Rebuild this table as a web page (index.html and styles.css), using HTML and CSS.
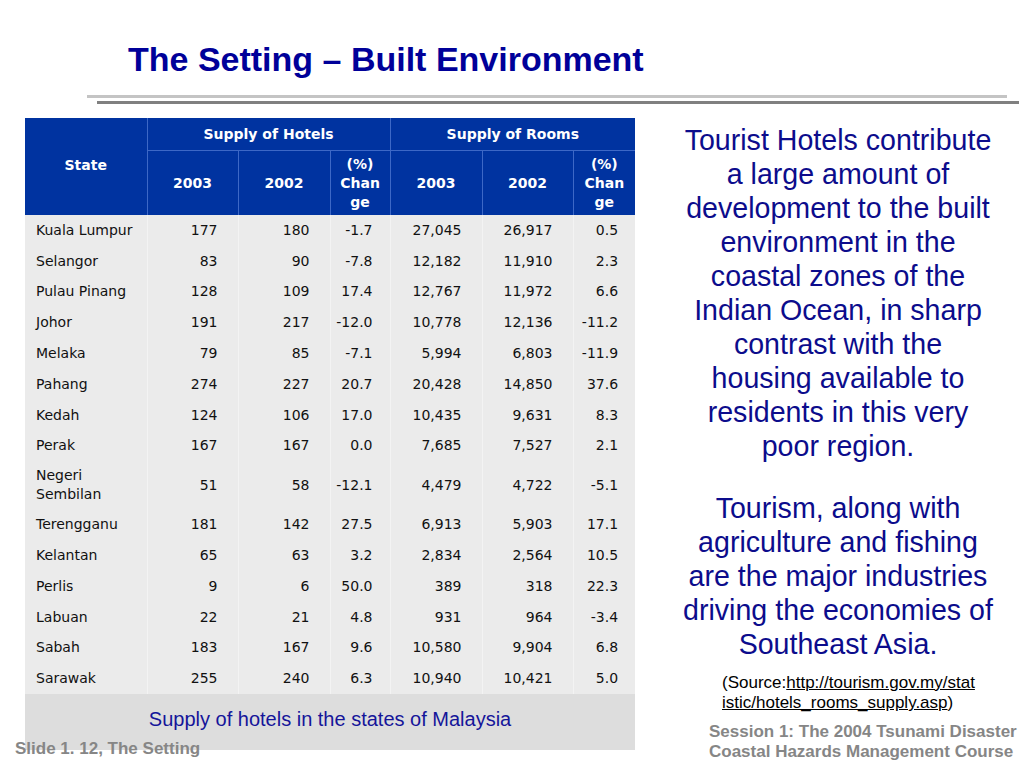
FILE: index.html
```html
<!DOCTYPE html>
<html>
<head>
<meta charset="utf-8">
<title>The Setting – Built Environment</title>
<link rel="stylesheet" href="styles.css">
</head>
<body>
<div class="slide">
  <h1 class="title">The Setting – Built Environment</h1>
  <div class="rule rule-light"></div>
  <div class="rule rule-dark"></div>

  <div class="main">
    <div class="table-wrap">
      <table class="data">
        <colgroup>
          <col class="c-state"><col class="c-num"><col class="c-num2"><col class="c-pct">
          <col class="c-num2"><col class="c-num"><col class="c-pct2">
        </colgroup>
        <thead>
          <tr class="h1">
            <th rowspan="2" class="state-h">State</th>
            <th colspan="3">Supply of Hotels</th>
            <th colspan="3">Supply of Rooms</th>
          </tr>
          <tr class="h2">
            <th>2003</th><th>2002</th><th class="pct-h">(%)<br>Change</th>
            <th>2003</th><th>2002</th><th class="pct-h">(%)<br>Change</th>
          </tr>
        </thead>
        <tbody>
          <tr><td>Kuala Lumpur</td><td>177</td><td>180</td><td>-1.7</td><td>27,045</td><td>26,917</td><td>0.5</td></tr>
          <tr><td>Selangor</td><td>83</td><td>90</td><td>-7.8</td><td>12,182</td><td>11,910</td><td>2.3</td></tr>
          <tr><td>Pulau Pinang</td><td>128</td><td>109</td><td>17.4</td><td>12,767</td><td>11,972</td><td>6.6</td></tr>
          <tr><td>Johor</td><td>191</td><td>217</td><td>-12.0</td><td>10,778</td><td>12,136</td><td>-11.2</td></tr>
          <tr><td>Melaka</td><td>79</td><td>85</td><td>-7.1</td><td>5,994</td><td>6,803</td><td>-11.9</td></tr>
          <tr><td>Pahang</td><td>274</td><td>227</td><td>20.7</td><td>20,428</td><td>14,850</td><td>37.6</td></tr>
          <tr><td>Kedah</td><td>124</td><td>106</td><td>17.0</td><td>10,435</td><td>9,631</td><td>8.3</td></tr>
          <tr><td>Perak</td><td>167</td><td>167</td><td>0.0</td><td>7,685</td><td>7,527</td><td>2.1</td></tr>
          <tr class="tall"><td>Negeri<br>Sembilan</td><td>51</td><td>58</td><td>-12.1</td><td>4,479</td><td>4,722</td><td>-5.1</td></tr>
          <tr><td>Terengganu</td><td>181</td><td>142</td><td>27.5</td><td>6,913</td><td>5,903</td><td>17.1</td></tr>
          <tr><td>Kelantan</td><td>65</td><td>63</td><td>3.2</td><td>2,834</td><td>2,564</td><td>10.5</td></tr>
          <tr><td>Perlis</td><td>9</td><td>6</td><td>50.0</td><td>389</td><td>318</td><td>22.3</td></tr>
          <tr><td>Labuan</td><td>22</td><td>21</td><td>4.8</td><td>931</td><td>964</td><td>-3.4</td></tr>
          <tr><td>Sabah</td><td>183</td><td>167</td><td>9.6</td><td>10,580</td><td>9,904</td><td>6.8</td></tr>
          <tr><td>Sarawak</td><td>255</td><td>240</td><td>6.3</td><td>10,940</td><td>10,421</td><td>5.0</td></tr>
          <tr class="caption-row"><td colspan="7">Supply of hotels in the states of Malaysia</td></tr>
        </tbody>
      </table>
    </div>

    <div class="side">
      <p class="blurb">Tourist Hotels contribute<br>a large amount of<br>development to the built<br>environment in the<br>coastal zones of the<br>Indian Ocean, in sharp<br>contrast with the<br>housing available to<br>residents in this very<br>poor region.</p>
      <p class="blurb second">Tourism, along with<br>agriculture and fishing<br>are the major industries<br>driving the economies of<br>Southeast Asia.</p>
      <p class="source">(Source:<a href="#">http://tourism.gov.my/stat<br>istic/hotels_rooms_supply.asp</a>)</p>
    </div>
  </div>

  <div class="foot-left">Slide 1. 12, The Setting</div>
  <div class="foot-right">Session 1: The 2004 Tsunami Disaster<br>Coastal Hazards Management Course</div>
</div>
</body>
</html>
```

FILE: styles.css
```css
html, body {
  margin: 0;
  padding: 0;
  background: #ffffff;
}

.slide {
  position: relative;
  width: 1024px;
  height: 768px;
  overflow: hidden;
  background: #ffffff;
  font-family: "Liberation Sans", Arial, sans-serif;
}

.title {
  margin: 0;
  padding: 39px 0 0 128px;
  font-size: 34px;
  line-height: 40px;
  font-weight: bold;
  color: #000099;
}

.rule {
  height: 3px;
}

.rule-light {
  margin: 16px 17px 0 87px;
  background: #c4c4c4;
}

.rule-dark {
  margin: 3px 5px 0 97px;
  background: #808080;
}

.main {
  display: flex;
  margin-top: 14px;
}

.table-wrap {
  margin-left: 25px;
  width: 610px;
  flex: none;
}

.data {
  width: 610px;
  border-collapse: collapse;
  table-layout: fixed;
  font-family: "DejaVu Sans", Verdana, sans-serif;
  font-size: 14px;
}

.c-state { width: 122px; }
.c-num { width: 91px; }
.c-num2 { width: 92px; }
.c-pct { width: 60px; }
.c-pct2 { width: 62px; }

.data th {
  background: #0033a0;
  color: #ffffff;
  font-weight: bold;
  text-align: center;
  line-height: 19px;
  padding: 0;
  border: 1px solid #3d68c6;
}

.data thead tr:first-child th {
  border-top: none;
}

.data th:first-child {
  border-left: none;
}

.data .h1 th {
  height: 32px;
}

.data .h2 th {
  height: 64px;
}

.data .state-h {
  border-bottom: none;
  padding-bottom: 2px;
}

.data .h2 th:last-child,
.data .h1 th:last-child {
  border-right: none;
}

.data .h2 th {
  border-bottom: none;
}

.pct-h {
  word-break: break-all;
  padding: 0 6px !important;
}

.data td {
  background: #ebebeb;
  color: #111111;
  height: 30.8px;
  line-height: 19px;
  padding: 0 20px 0 0;
  text-align: right;
  border-left: 1px solid #f3f3f3;
}

.data td:first-child {
  text-align: left;
  padding: 0 0 0 11px;
  border-left: none;
}

.data td:nth-child(4),
.data td:nth-child(7) {
  padding-right: 17px;
}

.data tr.tall td {
  height: 48px;
}

.data tr.caption-row td {
  background: #dddddd;
  height: 50px;
  padding: 0 0 6px 0;
  line-height: 24px;
  text-align: center;
  font-family: "Liberation Sans", Arial, sans-serif;
  font-size: 20px;
  color: #15159a;
  vertical-align: middle;
}

.side {
  flex: 1;
  padding: 5px 18px 0 35px;
}

.blurb {
  margin: 0;
  text-align: center;
  font-size: 28.6px;
  line-height: 34px;
  color: #0c0c8c;
  white-space: nowrap;
}

.blurb.second {
  margin-top: 28px;
}

.source {
  margin: 12px 0 0 52px;
  font-size: 17px;
  line-height: 20px;
  color: #000000;
  white-space: nowrap;
}

.source a {
  color: #000000;
  text-decoration: underline;
}

.foot-left {
  position: absolute;
  left: 15px;
  top: 739px;
  font-size: 17px;
  line-height: 20px;
  font-weight: bold;
  color: #868686;
}

.foot-right {
  position: absolute;
  left: 709px;
  top: 722px;
  font-size: 17px;
  line-height: 20px;
  font-weight: bold;
  color: #868686;
  white-space: nowrap;
}
```
